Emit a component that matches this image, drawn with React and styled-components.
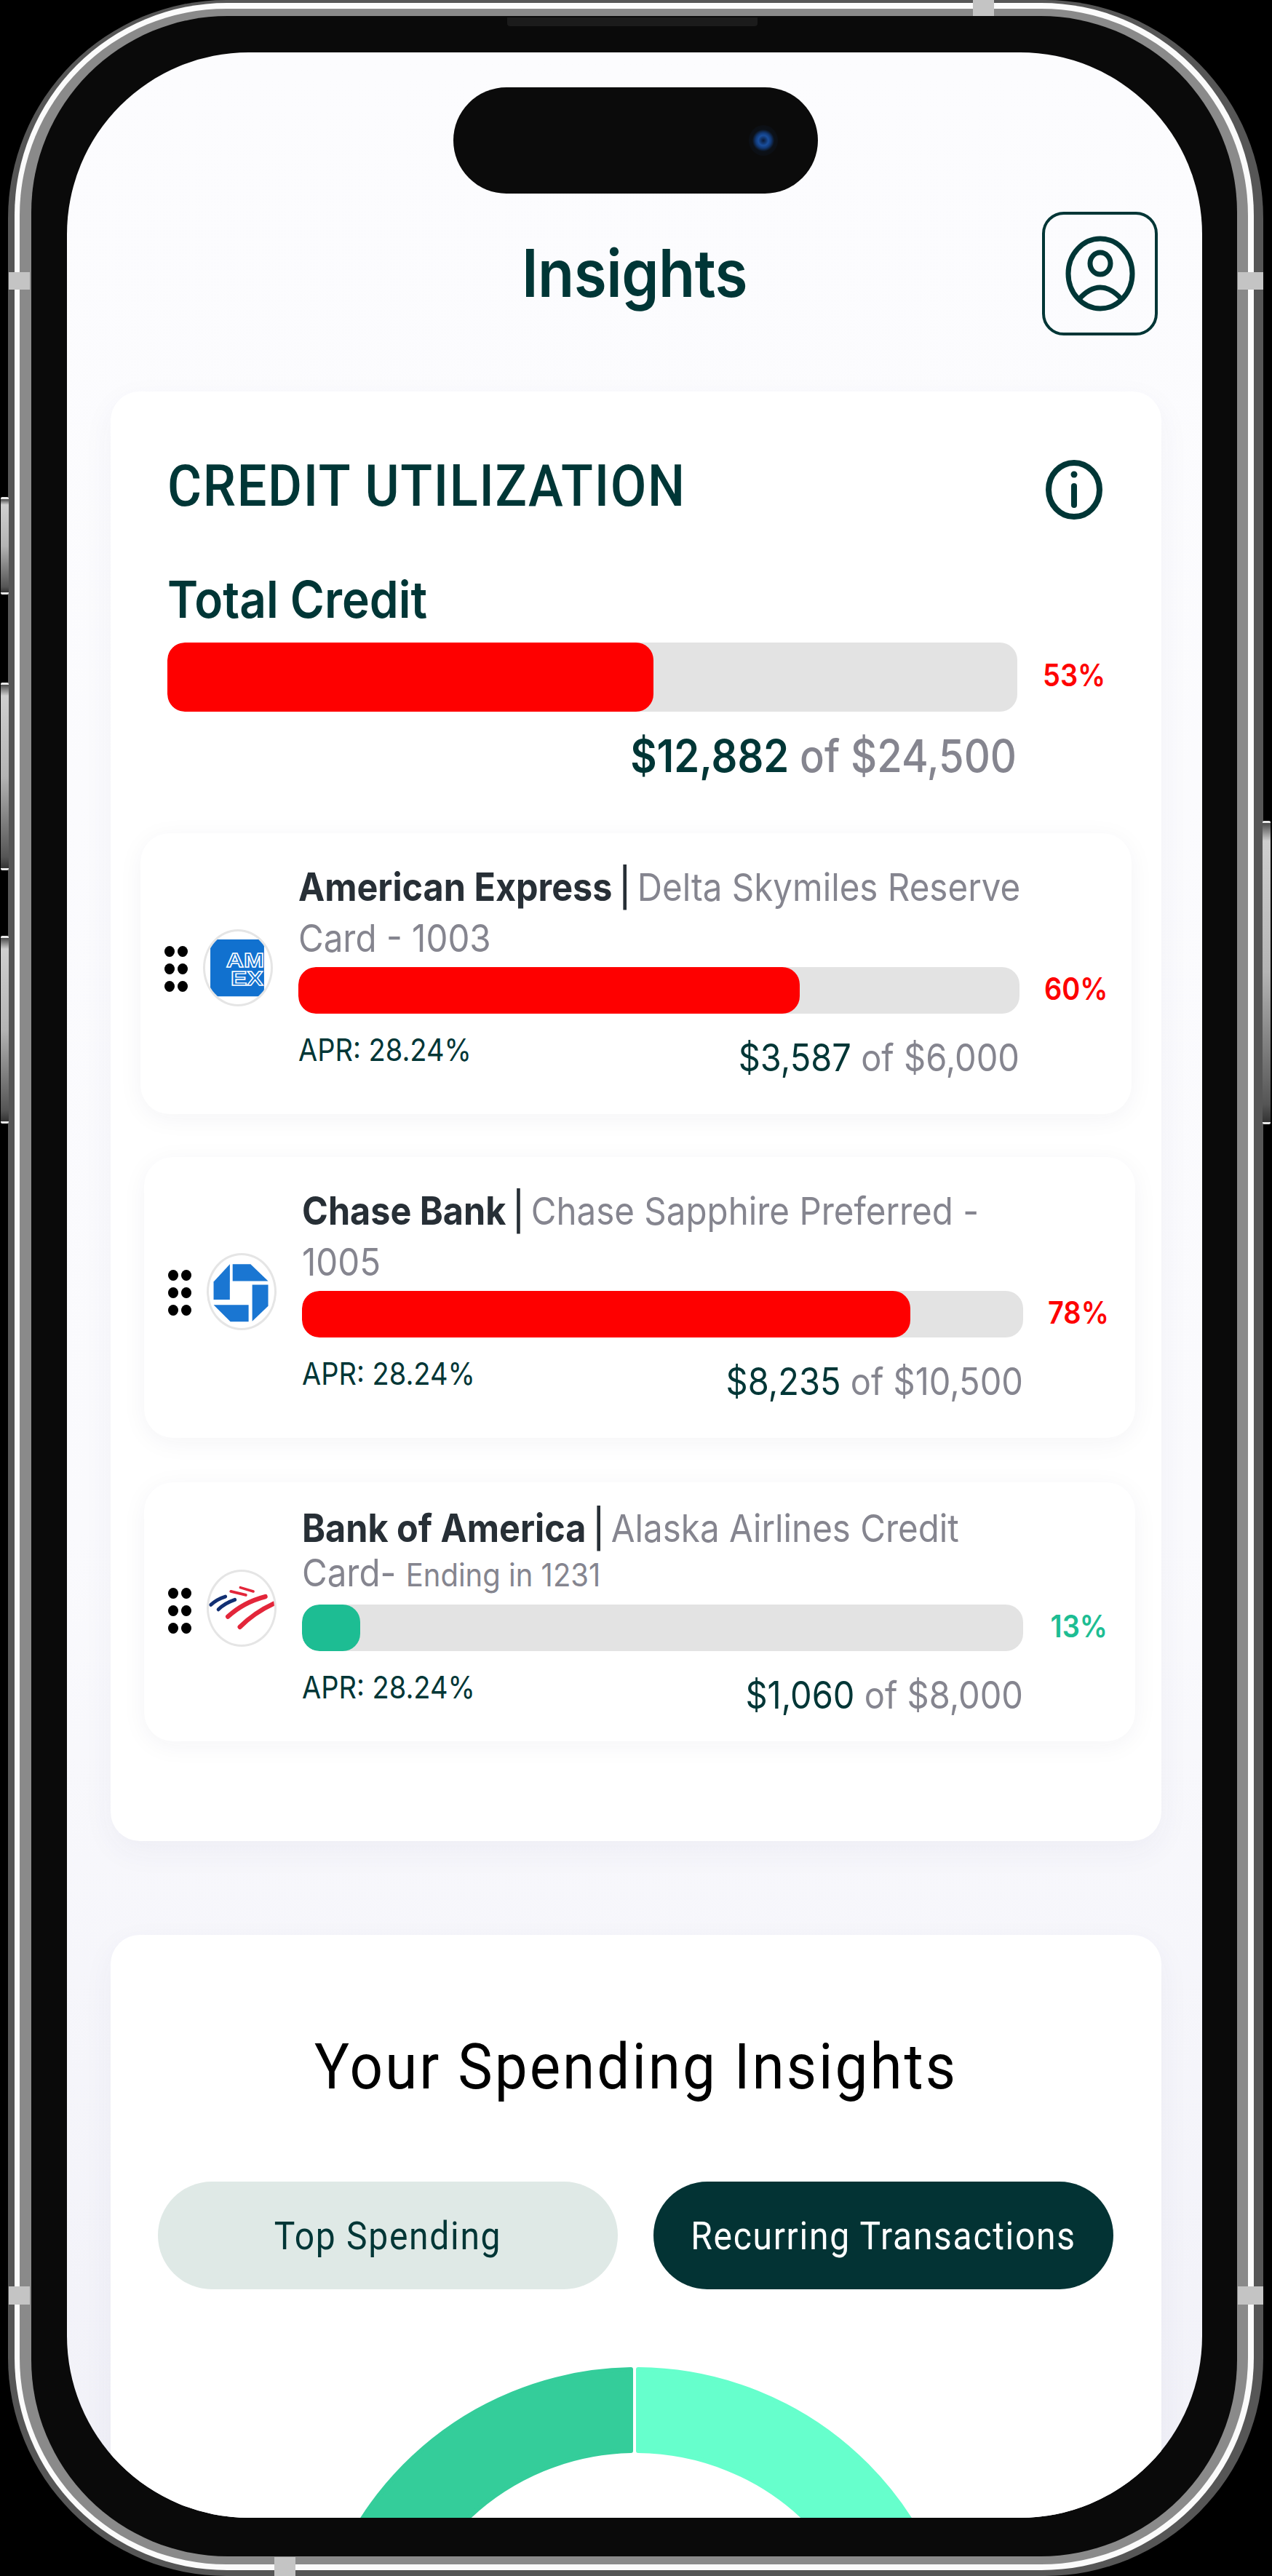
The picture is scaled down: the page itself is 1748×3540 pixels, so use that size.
import styled, { createGlobalStyle, css } from "styled-components";

const colors = {
  ink: "#003636",
  bank: "#272f36",
  grey: "#85858f",
  red: "#fe0000",
  green: "#1dbd93",
  track: "#e3e3e3",
};

const GlobalStyle = createGlobalStyle`
  html, body {
    margin: 0;
    padding: 0;
    background: #000;
  }
  * {
    box-sizing: border-box;
  }
  body {
    font-family: "Inter", "Liberation Sans", sans-serif;
  }
`;

// the whole mockup is slightly stretched vertically, text included
const tall = css`
  transform: scaleY(1.1);
`;

const Page = styled.div`
  position: relative;
  width: 1748px;
  height: 3540px;
  padding-left: 11px;
  overflow: hidden;
`;

const Band = styled.div`
  width: ${(props) => props.$width || "100%"};
  height: 100%;
  padding: ${(props) => props.$pad};
  background: ${(props) => props.$color};
  border-radius: ${(props) => props.$radius}px;
`;

const Screen = styled.div`
  position: relative;
  height: 100%;
  overflow: hidden;
  border-radius: 250px;
  padding-top: 219px;
  background: linear-gradient(180deg, #fcfcfe 0%, #fafafd 60%, #f1f1f8 100%);
`;

const SideButton = styled.div`
  position: absolute;
  top: ${(props) => props.$top}px;
  ${(props) => (props.$right ? "left: 1735px;" : "left: 1px;")}
  width: 11px;
  height: ${(props) => props.$height}px;
  border-top: 3px solid #e8e8e8;
  border-bottom: 3px solid #e8e8e8;
  border-radius: 2px;
  background: linear-gradient(180deg, #4a4a4a 0%, #cfcfcf 6%, #b4b4b4 50%, #555 94%, #333 100%);
`;

const Antenna = styled.div`
  position: absolute;
  top: ${(props) => props.$top}px;
  left: ${(props) => props.$left}px;
  width: ${(props) => props.$width}px;
  height: ${(props) => props.$height}px;
  background: #c4c4c4;
`;

const Speaker = styled.div`
  position: absolute;
  top: 24px;
  left: 697px;
  width: 344px;
  height: 12px;
  background: #1b1b1b;
  border-radius: 0 0 4px 4px;
`;

const Island = styled.div`
  position: absolute;
  top: 48px;
  left: 531px;
  width: 501px;
  height: 146px;
  border-radius: 73px;
  background: #0b0b0b;
`;

const Camera = styled.div`
  position: absolute;
  top: 52px;
  left: 406px;
  width: 40px;
  height: 42px;
  border-radius: 50%;
  background: radial-gradient(
    circle,
    #0a1a38 0%,
    #1a4f9e 24%,
    #123a78 36%,
    #0c1118 52%,
    #0c0c0e 100%
  );
`;

const Header = styled.header`
  display: grid;
  grid-template-columns: 1fr auto 1fr;
  align-items: center;
  padding: 0 61px;
  height: 170px;
`;

const Title = styled.h1`
  grid-column: 2;
  margin: 0;
  font-size: 82px;
  font-weight: 600;
  line-height: 1;
  letter-spacing: -0.5px;
  color: ${colors.ink};
  ${tall}
`;

const ProfileButton = styled.button`
  grid-column: 3;
  justify-self: end;
  display: flex;
  align-items: center;
  justify-content: center;
  width: 159px;
  height: 170px;
  padding: 0;
  background: transparent;
  border: 4px solid ${colors.ink};
  border-radius: 30px;
`;

const Card = styled.section`
  margin: ${(props) => props.$margin};
  padding: ${(props) => props.$pad};
  width: 1444px;
  background: #fff;
  border-radius: 40px;
  box-shadow: 0 14px 44px rgba(60, 60, 110, 0.05);
`;

const CardHead = styled.div`
  display: flex;
  align-items: center;
  justify-content: space-between;
  height: 90px;
  padding: 0 81px 0 78px;
`;

const CardTitle = styled.h2`
  margin: 0;
  font-family: "Roboto", sans-serif;
  font-size: 72px;
  font-weight: 500;
  letter-spacing: 1.7px;
  color: ${colors.ink};
  ${tall}
`;

const InfoIcon = styled.svg`
  margin: 10px 0 0;
`;

const TotalBlock = styled.div`
  padding-left: 78px;
`;

const TotalLabel = styled.div`
  margin-top: 76px;
  font-size: 64px;
  font-weight: 600;
  line-height: 70px;
  color: ${colors.ink};
  ${tall}
`;

const BarRow = styled.div`
  display: flex;
  align-items: center;
  margin-top: ${(props) => props.$top || 0}px;
  padding-right: ${(props) => props.$right || 0}px;
  gap: ${(props) => props.$gap}px;
`;

const Track = styled.div`
  flex: 1;
  height: ${(props) => props.$height}px;
  background: ${colors.track};
  border-radius: 24px;
  overflow: hidden;
`;

const Fill = styled.div`
  height: 100%;
  background: ${(props) => props.$color};
  border-radius: 24px;
`;

const Percent = styled.span`
  flex: none;
  width: 82px;
  margin-top: -5px;
  text-align: right;
  font-size: 38px;
  font-weight: 600;
  white-space: nowrap;
  color: ${(props) => props.$color};
  ${tall}
`;

const TotalAmount = styled.div`
  margin: 26px 199px 0 0;
  text-align: right;
  font-size: 56px;
  font-weight: 500;
  line-height: 70px;
  color: ${colors.grey};
  ${tall}
`;

const Strong = styled.span`
  font-weight: ${(props) => props.$weight || 600};
  color: ${colors.ink};
`;

const CardList = styled.div`
  display: flex;
  flex-direction: column;
  margin-top: 71px;
`;

const Account = styled.article`
  display: flex;
  align-items: center;
  width: 1362px;
  margin: ${(props) => props.$margin};
  padding: ${(props) => props.$pad};
  background: #fff;
  border-radius: 40px;
  box-shadow: 0 6px 34px rgba(40, 40, 70, 0.05);
`;

const Handle = styled.div`
  display: grid;
  grid-template-columns: repeat(2, 14px);
  gap: 9px 4px;
  flex: none;
  margin: ${(props) => (props.$tight ? "2px" : "-4px")} 21px 0 0;
`;

const Dot = styled.span`
  width: 14px;
  height: 15px;
  border-radius: 50%;
  background: #000;
`;

const LogoOval = styled.div`
  flex: none;
  width: 96px;
  height: 106px;
  margin: ${(props) => (props.$tight ? "-5px" : "-7px")} 35px 0 0;
  border: 3px solid #e5e5e5;
  border-radius: 50%;
  overflow: hidden;
  background: #fff;
  svg {
    display: block;
    width: 100%;
    height: 100%;
  }
`;

const AccountBody = styled.div`
  flex: 1;
  min-width: 0;
`;

const NameLine = styled.div`
  white-space: nowrap;
  font-size: 47.5px;
  line-height: ${(props) => props.$height || 70}px;
  margin-bottom: ${(props) => props.$after || 0}px;
  color: ${colors.grey};
  ${tall}
`;

const Bank = styled.span`
  font-size: 48.5px;
  font-weight: 700;
  color: ${colors.bank};
`;

const Pipe = styled.span`
  color: ${colors.bank};
  font-weight: 500;
  margin: 0 9px;
`;

const Small = styled.span`
  font-size: 40px;
`;

const FooterRow = styled.div`
  display: flex;
  align-items: flex-start;
  justify-content: space-between;
  margin: 30px 116px 0 0;
`;

const Apr = styled.span`
  font-size: 38px;
  line-height: 40px;
  color: ${colors.ink};
  ${tall}
`;

const Amount = styled.span`
  font-size: 47px;
  line-height: 60px;
  color: ${colors.grey};
  ${tall}
`;

const SpendingTitle = styled.h2`
  margin: 0;
  text-align: center;
  font-family: "Roboto", sans-serif;
  font-size: 80px;
  font-weight: 400;
  letter-spacing: 3px;
  line-height: 90px;
  color: #000;
  ${tall}
`;

const Tabs = styled.div`
  display: grid;
  grid-template-columns: 1fr 1fr;
  gap: 49px;
  margin-top: 113px;
  padding: 0 66px 0 65px;
`;

const Tab = styled.button`
  height: 148px;
  border: 0;
  border-radius: 74px;
  font-family: "Roboto", sans-serif;
  font-size: 48px;
  letter-spacing: 1.7px;
  background: ${(props) => (props.$active ? "#033334" : "#dfe9e6")};
  color: ${(props) => (props.$active ? "#fff" : colors.ink)};
`;

const TabLabel = styled.span`
  display: inline-block;
  ${tall}
`;

const Donut = styled.svg`
  display: block;
  margin: 107px auto 0;
`;

const Dots = ({ tight }) => (
  <Handle $tight={tight}>
    {[0, 1, 2, 3, 4, 5].map((i) => (
      <Dot key={i} />
    ))}
  </Handle>
);

const AmexLogo = () => (
  <svg viewBox="34 39 268 298" preserveAspectRatio="none">
    <defs>
      <clipPath id="amex-clip">
        <rect x="55" y="72" width="220" height="233" />
      </clipPath>
    </defs>
    <rect x="55" y="72" width="220" height="233" rx="10" fill="#1171cf" />
    <g clipPath="url(#amex-clip)">
      <g
        transform="scale(1 0.8)"
        fontFamily="Liberation Sans"
        fontWeight="700"
        fill="#1171cf"
        stroke="#fff"
        strokeWidth="5"
      >
        <text x="120" y="232" fontSize="100">AM</text>
        <text x="138" y="326" fontSize="100">EX</text>
      </g>
    </g>
  </svg>
);

const ChaseLogo = () => (
  <svg viewBox="223 259 234 195" preserveAspectRatio="none">
    <g fill="#1a76d2">
      <polygon points="308,283 372,283 435,328 308,328" />
      <polygon points="378,338 435,338 435,395 378,436" />
      <polygon points="365,392 365,437 300,437 240,392" />
      <polygon points="240,330 298,283 298,378 240,378" />
    </g>
  </svg>
);

const BofaLogo = () => (
  <svg viewBox="44 54 262 282" preserveAspectRatio="none">
    <g fill="none" strokeLinecap="round">
      <g stroke="#122f72" strokeWidth="14">
        <path d="M52 182 Q76 160 110 150" />
        <path d="M82 200 Q106 176 148 162" />
      </g>
      <g stroke="#e3263a">
        <path d="M170 115 L222 130" strokeWidth="10" />
        <path d="M132 130 L192 144" strokeWidth="11" />
        <path d="M120 228 Q182 172 270 150" strokeWidth="18" />
        <path d="M168 268 Q226 212 304 177" strokeWidth="18" />
      </g>
    </g>
  </svg>
);

const accounts = [
  {
    id: "amex",
    margin: "0 0 59px 41px",
    pad: "39px 38px 48px 33px",
    logo: <AmexLogo />,
    bank: "American Express",
    lineOne: "Delta Skymiles Reserve",
    lineTwo: "Card - 1003",
    fill: 69.5,
    color: colors.red,
    percent: "60%",
    used: "$3,587",
    limit: "$6,000",
  },
  {
    id: "chase",
    margin: "0 0 61px 46px",
    pad: "39px 38px 48px 33px",
    logo: <ChaseLogo />,
    bank: "Chase Bank",
    lineOne: "Chase Sapphire Preferred -",
    lineTwo: "1005",
    fill: 84.4,
    color: colors.red,
    percent: "78%",
    used: "$8,235",
    limit: "$10,500",
  },
  {
    id: "bofa",
    margin: "0 0 0 46px",
    pad: "28px 38px 34px 33px",
    logo: <BofaLogo />,
    bank: "Bank of America",
    lineOne: "Alaska Airlines Credit",
    lineTwo: (
      <>
        Card- <Small>Ending in 1231</Small>
      </>
    ),
    tight: true,
    fill: 8.1,
    color: colors.green,
    percent: "13%",
    used: "$1,060",
    limit: "$8,000",
  },
];

const App = () => {
  return (
    <Page>
      <GlobalStyle />
      <Band $pad="4px 13px 8px 9px" $color="#565656" $radius={300} $width="1725px">
        <Band $pad="8px 8px 8px 7px" $color="#fbfbfb" $radius={292}>
          <Band $pad="10px 15px 11px 16px" $color="#8a8a8a" $radius={284}>
            <Band $pad="50px 48px 53px 49px" $color="#0a0a0a" $radius={270}>
              <Screen>
                <Island>
                  <Camera />
                </Island>
                <Header>
                  <Title>Insights</Title>
                  <ProfileButton aria-label="Profile">
                    <svg width="100" height="108" viewBox="0 0 100 108" fill="none" stroke={colors.ink} strokeWidth="7">
                      <ellipse cx="50" cy="54" rx="44" ry="48" />
                      <ellipse cx="50" cy="40" rx="14" ry="15" />
                      <path d="M20 90 Q50 56 80 90" />
                    </svg>
                  </ProfileButton>
                </Header>

                <Card $margin="77px 0 0 60px" $pad="85px 0 137px 0">
                  <CardHead>
                    <CardTitle>CREDIT UTILIZATION</CardTitle>
                    <InfoIcon width="78" height="82" viewBox="0 0 78 82" fill="none" stroke={colors.ink} strokeWidth="8" strokeLinecap="round">
                      <ellipse cx="39" cy="41" rx="35" ry="37" />
                      <path d="M39 36 V62" />
                      <circle cx="39" cy="20" r="4.5" fill={colors.ink} stroke="none" />
                    </InfoIcon>
                  </CardHead>

                  <TotalBlock>
                    <TotalLabel>Total Credit</TotalLabel>
                    <BarRow $top={24} $gap={35} $right={81}>
                      <Track $height={95}>
                        <Fill $color={colors.red} style={{ width: "57.2%" }} />
                      </Track>
                      <Percent $color={colors.red}>53%</Percent>
                    </BarRow>
                    <TotalAmount>
                      <Strong>$12,882</Strong> of $24,500
                    </TotalAmount>
                  </TotalBlock>

                  <CardList>
                    {accounts.map((account) => (
                      <Account key={account.id} $margin={account.margin} $pad={account.pad}>
                        <Dots tight={account.tight} />
                        <LogoOval $tight={account.tight}>{account.logo}</LogoOval>
                        <AccountBody>
                          <NameLine>
                            <Bank>{account.bank}</Bank>
                            <Pipe>|</Pipe>
                            {account.lineOne}
                          </NameLine>
                          <NameLine $height={account.tight ? 52 : 70} $after={account.tight ? 15 : 5}>
                            {account.lineTwo}
                          </NameLine>
                          <BarRow $gap={34}>
                            <Track $height={64}>
                              <Fill $color={account.color} style={{ width: `${account.fill}%` }} />
                            </Track>
                            <Percent $color={account.color}>{account.percent}</Percent>
                          </BarRow>
                          <FooterRow>
                            <Apr>APR: 28.24%</Apr>
                            <Amount>
                              <Strong $weight={400}>{account.used}</Strong> of {account.limit}
                            </Amount>
                          </FooterRow>
                        </AccountBody>
                      </Account>
                    ))}
                  </CardList>
                </Card>

                <Card $margin="129px 0 0 60px" $pad="136px 0 0 0">
                  <SpendingTitle>Your Spending Insights</SpendingTitle>
                  <Tabs>
                    <Tab><TabLabel>Top Spending</TabLabel></Tab>
                    <Tab $active><TabLabel>Recurring Transactions</TabLabel></Tab>
                  </Tabs>
                  <Donut width="900" height="900" viewBox="0 0 900 900" strokeWidth="6" strokeLinejoin="round">
                    <path d="M443 3.1 A447 447 0 0 0 3 450 H115 A335 335 0 0 1 443 115.1 Z" fill="#34cd9a" stroke="#34cd9a" />
                    <path d="M453 3 A447 447 0 0 1 897 450 H785 A335 335 0 0 0 453 115 Z" fill="#66ffcc" stroke="#66ffcc" />
                  </Donut>
                </Card>
              </Screen>
            </Band>
          </Band>
        </Band>
      </Band>

      <Speaker />
      <Antenna $left={12} $top={374} $width={29} $height={24} />
      <Antenna $left={1701} $top={374} $width={35} $height={24} />
      <Antenna $left={12} $top={3142} $width={29} $height={25} />
      <Antenna $left={1701} $top={3142} $width={35} $height={25} />
      <Antenna $left={1337} $top={0} $width={29} $height={22} />
      <Antenna $left={377} $top={3514} $width={29} $height={26} />
      <SideButton $top={683} $height={134} />
      <SideButton $top={938} $height={258} />
      <SideButton $top={1286} $height={258} />
      <SideButton $top={1128} $height={417} $right />
    </Page>
  );
};

export default App;
